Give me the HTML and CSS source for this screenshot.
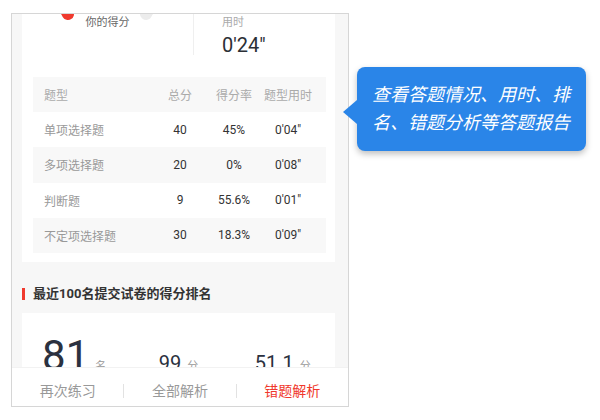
FILE: index.html
```html
<!DOCTYPE html>
<html lang="zh-CN">
<head>
    <meta charset="UTF-8">
    <meta name="viewport" content="width=device-width, initial-scale=1.0">
    <title>答题报告</title>
    <link rel="stylesheet" href="styles.css">
</head>
<body>
    <div class="phone">
        <div class="card report-card">
            <div class="summary">
                <div class="score-side">
                    <svg class="gauge" width="171" height="81" viewBox="0 0 171 81">
                        <path d="M46 40 A46 46 0 1 1 124 40" fill="none" stroke="#ececec" stroke-width="12" stroke-linecap="round"/>
                        <path d="M46 40 A46 46 0 0 1 85 -30" fill="none" stroke="#f03a2e" stroke-width="12" stroke-linecap="round"/>
                    </svg>
                    <span class="score-label">你的得分</span>
                </div>
                <div class="time-side">
                    <span class="time-label">用时</span>
                    <span class="time-value">0'24"</span>
                </div>
            </div>

            <div class="type-table">
                <div class="type-row head">
                    <span class="type-name">题型</span>
                    <span>总分</span>
                    <span>得分率</span>
                    <span>题型用时</span>
                </div>
                <div class="type-row">
                    <span class="type-name">单项选择题</span>
                    <span>40</span>
                    <span>45%</span>
                    <span>0'04"</span>
                </div>
                <div class="type-row alt">
                    <span class="type-name">多项选择题</span>
                    <span>20</span>
                    <span>0%</span>
                    <span>0'08"</span>
                </div>
                <div class="type-row">
                    <span class="type-name">判断题</span>
                    <span>9</span>
                    <span>55.6%</span>
                    <span>0'01"</span>
                </div>
                <div class="type-row alt">
                    <span class="type-name">不定项选择题</span>
                    <span>30</span>
                    <span>18.3%</span>
                    <span>0'09"</span>
                </div>
            </div>
        </div>

        <h3 class="section-title">最近100名提交试卷的得分排名</h3>

        <div class="card rank-card">
            <div class="rank-item"><span class="rank-big">81</span><span class="unit">名</span></div>
            <div class="rank-item"><span class="rank-mid">99</span><span class="unit">分</span></div>
            <div class="rank-item"><span class="rank-mid">51.1</span><span class="unit">分</span></div>
        </div>

        <div class="action-bar">
            <a class="action">再次练习</a>
            <a class="action">全部解析</a>
            <a class="action wrong">错题解析</a>
        </div>
    </div>

    <div class="tip">查看答题情况、用时、排名、错题分析等答题报告</div>
</body>
</html>
```

FILE: styles.css
```css
body {
    margin: 0;
    font-family: 'Roboto', 'Noto Sans CJK SC', sans-serif;
    background-color: #fff;
    color: #333;
    display: flex;
    align-items: flex-start;
}

.phone {
    position: relative;
    box-sizing: border-box;
    width: 338px;
    height: 394px;
    margin: 13px 0 0 11px;
    border: 1px solid #d6d6d6;
    background-color: #f7f7f7;
    overflow: hidden;
}

.card {
    background-color: #fff;
    margin: 0 13px 0 10px;
}

.report-card {
    margin-top: -40px;
    padding-bottom: 9px;
}

.summary {
    display: flex;
    height: 81px;
}

.score-side {
    position: relative;
    width: 171px;
    display: flex;
    flex-direction: column;
    align-items: center;
    padding-top: 41px;
    box-sizing: border-box;
}

.gauge {
    position: absolute;
    left: 0;
    top: 0;
}

.score-label {
    position: relative;
    font-size: 11px;
    line-height: 16px;
    color: #666;
}

.time-side {
    flex: 1;
    border-left: 1px solid #efefef;
    padding: 41px 0 0 28px;
    display: flex;
    flex-direction: column;
}

.time-label {
    font-size: 11px;
    line-height: 16px;
    color: #aaa;
}

.time-value {
    margin-top: 2px;
    font-size: 20px;
    line-height: 24px;
    color: #2b2f36;
}

.type-table {
    margin: 22px 9px 0 11px;
}

.type-row {
    display: grid;
    grid-template-columns: 1fr 54px 54px 54px;
    align-items: center;
    height: 35.2px;
    padding: 0 11px;
    font-size: 12px;
    color: #333;
    text-align: center;
}

.type-row.head,
.type-row.alt {
    background-color: #f8f8f8;
}

.type-row.head {
    color: #aaa;
}

.type-row .type-name {
    text-align: left;
    color: #999;
}

.type-row.head .type-name {
    color: #aaa;
}

.section-title {
    margin: 26px 0 13px 10px;
    padding-left: 8px;
    border-left: 3px solid #f03a2e;
    height: 12px;
    line-height: 12px;
    font-size: 13px;
    font-weight: bold;
    color: #333;
    display: flex;
    align-items: center;
}

.rank-card {
    display: grid;
    grid-template-columns: repeat(3, 1fr);
    align-items: baseline;
    padding-top: 22px;
    height: 80px;
    box-sizing: border-box;
}

.rank-item {
    display: flex;
    justify-content: center;
    align-items: baseline;
    gap: 6px;
}

.rank-big {
    font-size: 42px;
    line-height: 42px;
    color: #2b3140;
}

.rank-mid {
    font-size: 20px;
    color: #2b3140;
}

.unit {
    font-size: 11px;
    color: #999;
}

.action-bar {
    position: absolute;
    left: 0;
    right: 0;
    bottom: 0;
    height: 39px;
    box-sizing: border-box;
    padding-top: 8px;
    background-color: #fff;
    border-top: 1px solid #f2f2f2;
    display: flex;
    align-items: center;
}

.action {
    flex: 1;
    text-align: center;
    font-size: 14px;
    line-height: 14px;
    color: #999;
}

.action + .action {
    border-left: 1px solid #e2e2e2;
}

.action.wrong {
    color: #f0382b;
}

.tip {
    position: relative;
    box-sizing: border-box;
    width: 229px;
    margin: 67px 0 0 8px;
    padding: 14px 13px 14px 15px;
    background-color: #2a85e8;
    border-radius: 8px;
    box-shadow: 0 3px 6px rgba(0, 0, 0, 0.25);
    color: #fff;
    font-size: 18px;
    line-height: 28px;
    font-style: italic;
}

.tip::before {
    content: '';
    position: absolute;
    left: -14px;
    top: 33px;
    border-top: 12px solid transparent;
    border-bottom: 12px solid transparent;
    border-right: 14px solid #2a85e8;
}
```
